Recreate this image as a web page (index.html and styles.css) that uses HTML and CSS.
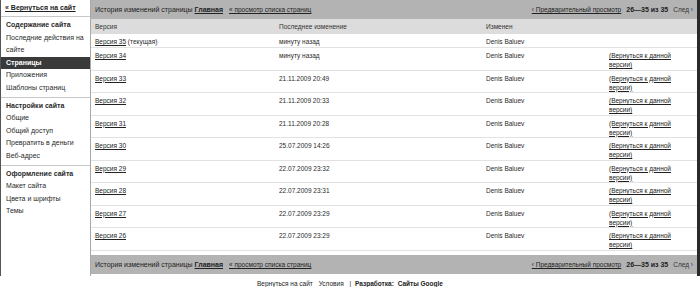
FILE: index.html
```html
<!DOCTYPE html>
<html lang="ru">
<head>
    <meta charset="UTF-8">
    <title>История изменений страницы Главная</title>
    <link rel="stylesheet" href="styles.css">
</head>
<body>
    <div class="page">
        <div class="sidebar">
            <div class="back"><a href="#">« Вернуться на сайт</a></div>
            <div class="section">
                <div class="heading">Содержание сайта</div>
                <div class="item">Последние действия на сайте</div>
                <div class="item selected">Страницы</div>
                <div class="item">Приложения</div>
                <div class="item">Шаблоны страниц</div>
            </div>
            <div class="section">
                <div class="heading">Настройки сайта</div>
                <div class="item">Общие</div>
                <div class="item">Общий доступ</div>
                <div class="item">Превратить в деньги</div>
                <div class="item">Веб-адрес</div>
            </div>
            <div class="section last">
                <div class="heading">Оформление сайта</div>
                <div class="item">Макет сайта</div>
                <div class="item">Цвета и шрифты</div>
                <div class="item">Темы</div>
            </div>
        </div>

        <div class="main">
            <div class="bar">
                <span class="title">История изменений страницы <a href="#"><b>Главная</b></a></span>
                <a href="#" class="list-link">« просмотр списка страниц</a>
                <span class="pager">
                    <a href="#">‹ Предварительный просмотр</a>
                    <b>26—35 из 35</b>
                    <span class="next">След ›</span>
                </span>
            </div>

            <table class="versions">
                <thead>
                    <tr>
                        <th class="c-ver">Версия</th>
                        <th class="c-date">Последнее изменение</th>
                        <th class="c-author">Изменен</th>
                        <th class="c-revert"></th>
                    </tr>
                </thead>
                <tbody>
                    <tr class="current">
                        <td><a href="#">Версия 35</a> (текущая)</td>
                        <td>минуту назад</td>
                        <td>Denis Baluev</td>
                        <td></td>
                    </tr>
                    <tr>
                        <td><a href="#">Версия 34</a></td>
                        <td>минуту назад</td>
                        <td>Denis Baluev</td>
                        <td><a href="#">(Вернуться к данной версии)</a></td>
                    </tr>
                    <tr>
                        <td><a href="#">Версия 33</a></td>
                        <td>21.11.2009 20:49</td>
                        <td>Denis Baluev</td>
                        <td><a href="#">(Вернуться к данной версии)</a></td>
                    </tr>
                    <tr>
                        <td><a href="#">Версия 32</a></td>
                        <td>21.11.2009 20:33</td>
                        <td>Denis Baluev</td>
                        <td><a href="#">(Вернуться к данной версии)</a></td>
                    </tr>
                    <tr>
                        <td><a href="#">Версия 31</a></td>
                        <td>21.11.2009 20:28</td>
                        <td>Denis Baluev</td>
                        <td><a href="#">(Вернуться к данной версии)</a></td>
                    </tr>
                    <tr>
                        <td><a href="#">Версия 30</a></td>
                        <td>25.07.2009 14:26</td>
                        <td>Denis Baluev</td>
                        <td><a href="#">(Вернуться к данной версии)</a></td>
                    </tr>
                    <tr>
                        <td><a href="#">Версия 29</a></td>
                        <td>22.07.2009 23:32</td>
                        <td>Denis Baluev</td>
                        <td><a href="#">(Вернуться к данной версии)</a></td>
                    </tr>
                    <tr>
                        <td><a href="#">Версия 28</a></td>
                        <td>22.07.2009 23:31</td>
                        <td>Denis Baluev</td>
                        <td><a href="#">(Вернуться к данной версии)</a></td>
                    </tr>
                    <tr>
                        <td><a href="#">Версия 27</a></td>
                        <td>22.07.2009 23:29</td>
                        <td>Denis Baluev</td>
                        <td><a href="#">(Вернуться к данной версии)</a></td>
                    </tr>
                    <tr>
                        <td><a href="#">Версия 26</a></td>
                        <td>22.07.2009 23:29</td>
                        <td>Denis Baluev</td>
                        <td><a href="#">(Вернуться к данной версии)</a></td>
                    </tr>
                </tbody>
            </table>

            <div class="bar bottom">
                <span class="title">История изменений страницы <a href="#"><b>Главная</b></a></span>
                <a href="#" class="list-link">« просмотр списка страниц</a>
                <span class="pager">
                    <a href="#">‹ Предварительный просмотр</a>
                    <b>26—35 из 35</b>
                    <span class="next">След ›</span>
                </span>
            </div>
        </div>
    </div>

    <div class="footer">
        <a href="#">Вернуться на сайт</a>
        <a href="#">Условия</a>
        <span class="sep">|</span>
        <b>Разработка:</b> <a href="#"><b>Сайты Google</b></a>
    </div>
</body>
</html>
```

FILE: styles.css
```css
body {
    margin: 0;
    font-family: "Liberation Sans", Arial, sans-serif;
    font-size: 6.5px;
    color: #2a2a2a;
    background: #fff;
}
a { color: #222; }

.page {
    display: flex;
    height: 276px;
}

/* left navigation */
.sidebar {
    width: 89px;
    flex-shrink: 0;
    border-left: 1px solid #555;
    border-right: 1px solid #a8a8a8;
    font-size: 7px;
}
.back {
    height: 16px;
    line-height: 15px;
    padding-left: 4px;
    border-bottom: 1px solid #c8c8c8;
    font-weight: bold;
}
.section {
    padding: 2px 0 2px;
    border-bottom: 1px solid #c8c8c8;
}
.section.last { border-bottom: none; }
.heading, .item {
    line-height: 12.6px;
    padding: 0 4px 0 5px;
}
.heading { font-weight: bold; }
.item.selected {
    background: #3a3a3a;
    color: #fff;
    font-weight: bold;
}

/* main column */
.main {
    flex: 1;
    display: flex;
    flex-direction: column;
    border-right: 3px solid #2a2a2a;
}
.bar {
    display: flex;
    align-items: center;
    height: 19px;
    padding: 0 4px;
    background: #b3b3b3;
    color: #222;
}
.bar .title { font-size: 7px; }
.bar .list-link { margin-left: 6px; }
.bar .pager {
    margin-left: auto;
    display: flex;
    gap: 5px;
    font-size: 6.5px;
}
.bar .pager b { font-size: 7px; }
.bar .next { color: #333; }
.bar.bottom { margin-top: auto; margin-bottom: 2px; }

.versions {
    width: 100%;
    border-collapse: collapse;
}
.versions th {
    background: #dcdcdc;
    font-weight: normal;
    text-align: left;
    height: 15px;
    padding: 0 4px;
    color: #333;
}
.versions td {
    vertical-align: top;
    line-height: 9px;
    padding: 3px 4px 0.5px;
    border-bottom: 1px solid #e2e2e2;
}
.c-ver { width: 176px; }
.c-date { width: 199px; }
.c-author { width: 115px; }
.versions td:last-child { padding-right: 18px; }
.versions tr.current td { padding-bottom: 1px; }

.footer {
    text-align: center;
    padding-top: 4px;
    color: #222;
}
.footer a { margin: 0 2px; }
.footer .sep { margin: 0 2px; }
```
